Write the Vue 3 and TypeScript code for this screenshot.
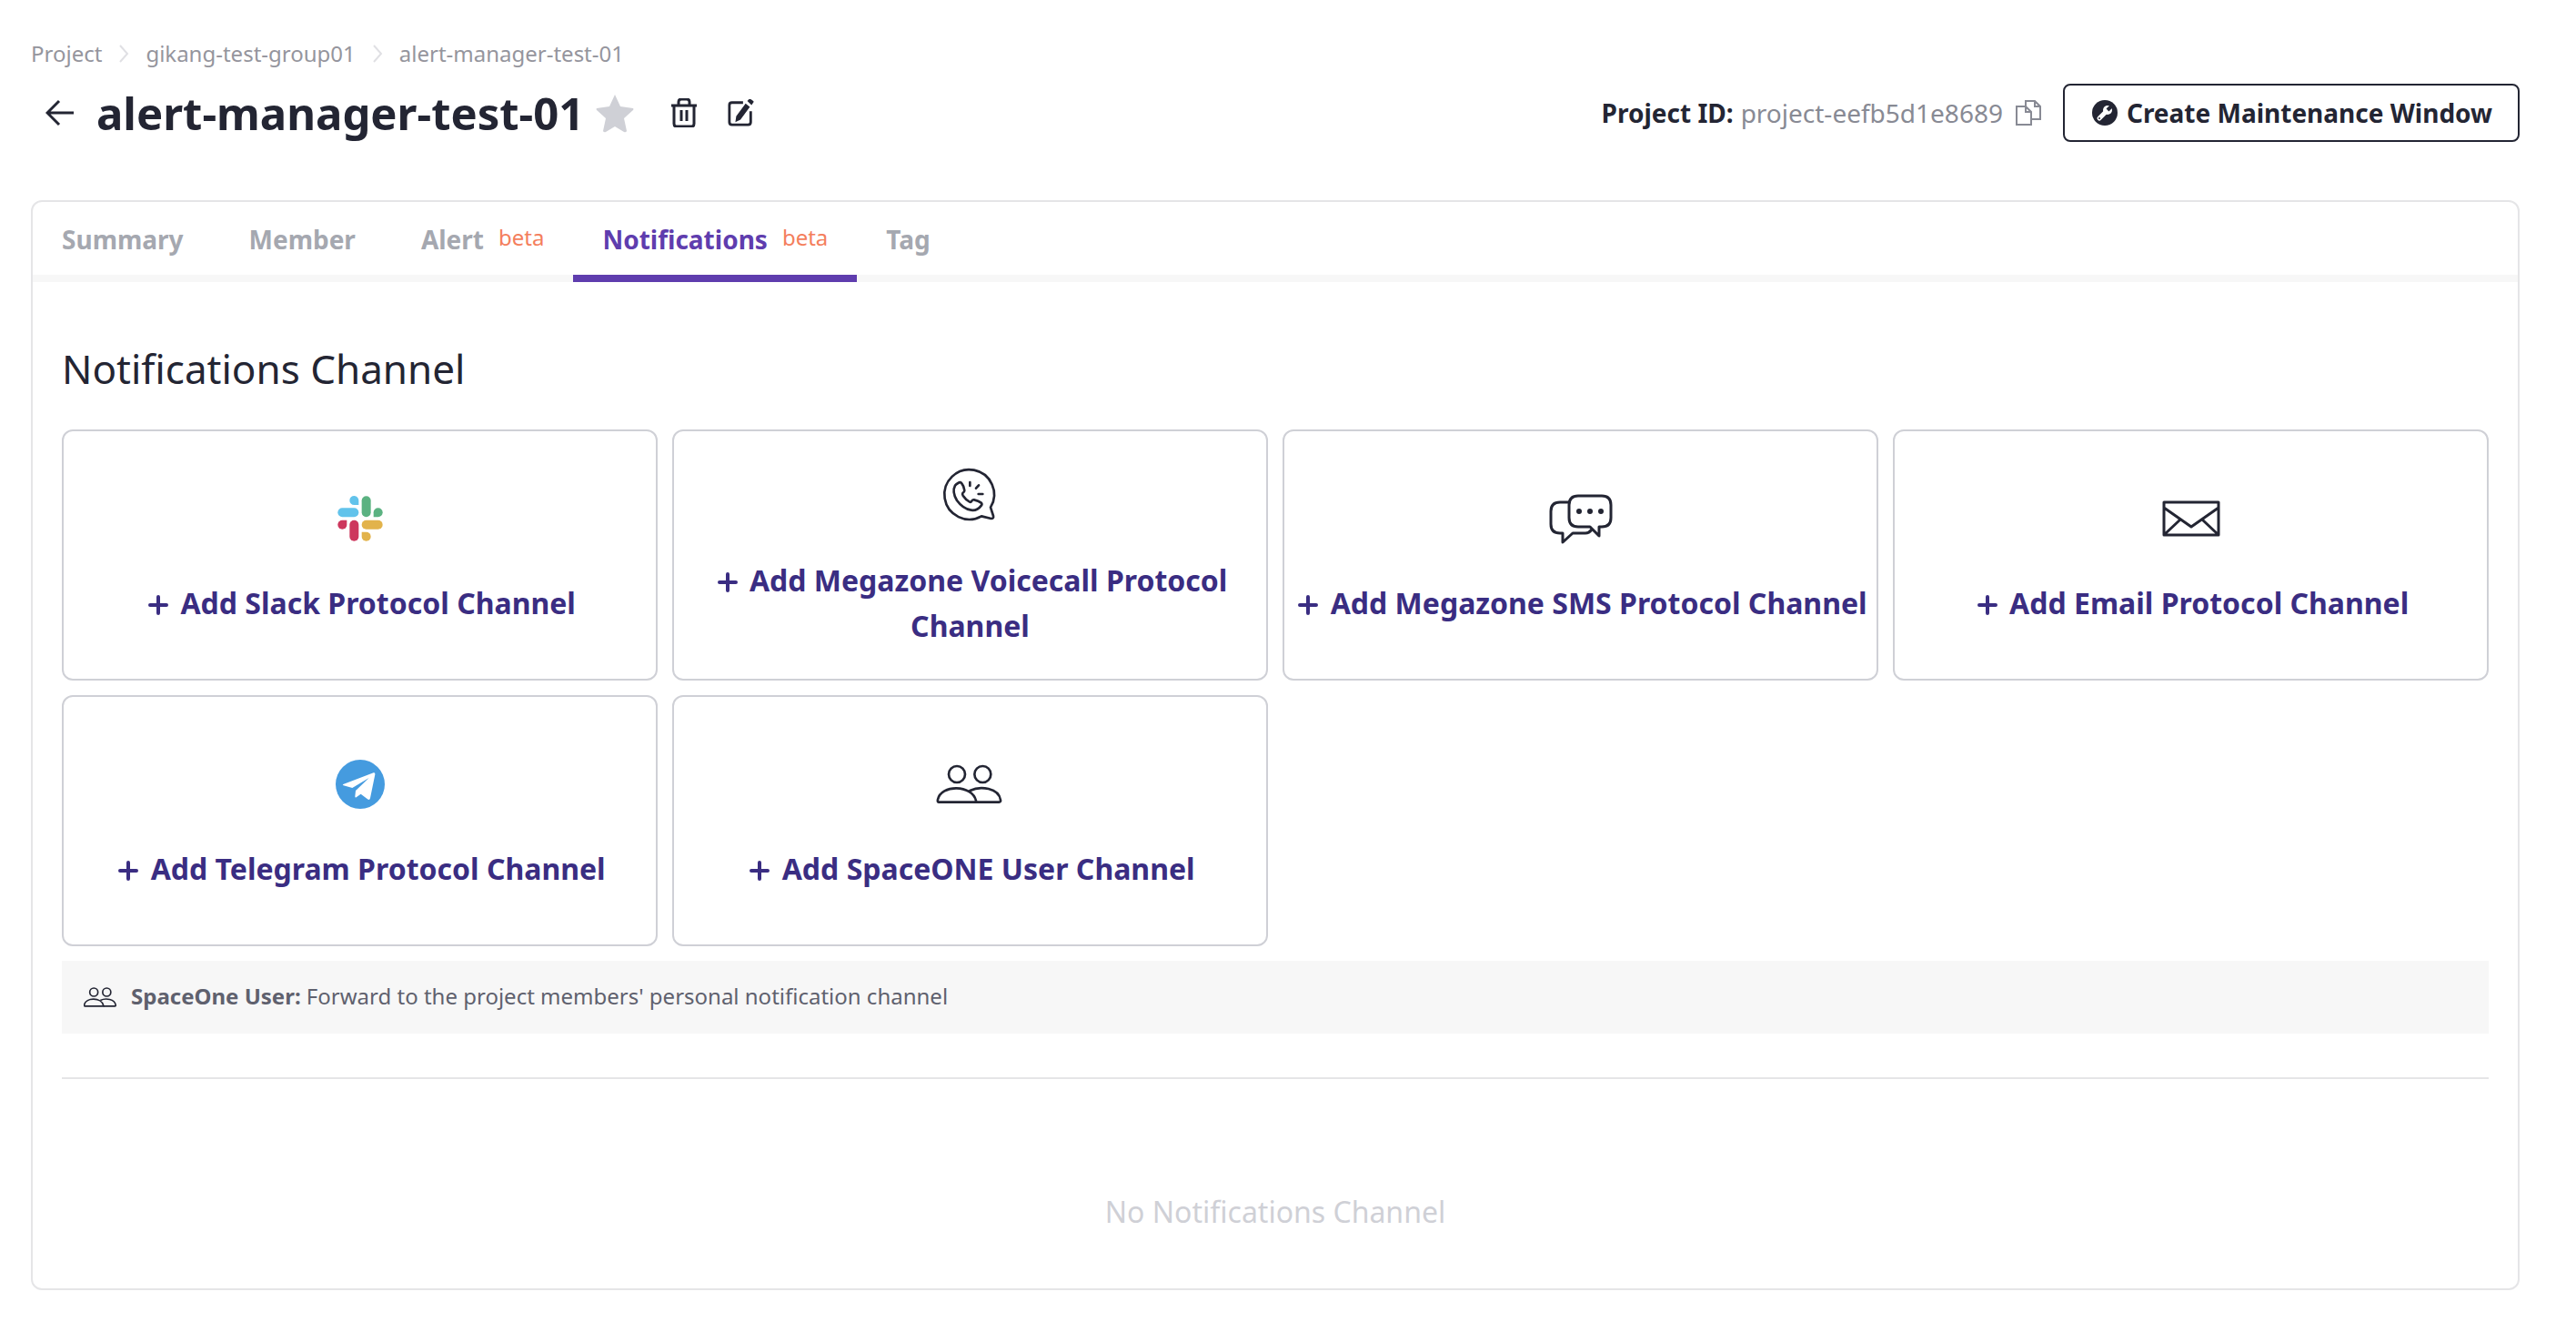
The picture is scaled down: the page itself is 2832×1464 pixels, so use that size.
<script setup lang="ts">
import { ref } from 'vue'

interface Tab {
  name: string
  label: string
  beta?: boolean
}

interface Protocol {
  icon: 'slack' | 'voicecall' | 'sms' | 'email' | 'telegram' | 'users'
  label: string
}

const projectName = 'alert-manager-test-01'
const projectId = 'project-eefb5d1e8689'
const parents: string[] = ['Project', 'gikang-test-group01']

const tabs: Tab[] = [
  { name: 'summary', label: 'Summary' },
  { name: 'member', label: 'Member' },
  { name: 'alert', label: 'Alert', beta: true },
  { name: 'notifications', label: 'Notifications', beta: true },
  { name: 'tag', label: 'Tag' },
]
const activeTab = ref('notifications')

const protocols: Protocol[] = [
  { icon: 'slack', label: 'Add Slack Protocol Channel' },
  { icon: 'voicecall', label: 'Add Megazone Voicecall Protocol Channel' },
  { icon: 'sms', label: 'Add Megazone SMS Protocol Channel' },
  { icon: 'email', label: 'Add Email Protocol Channel' },
  { icon: 'telegram', label: 'Add Telegram Protocol Channel' },
  { icon: 'users', label: 'Add SpaceONE User Channel' },
]
</script>

<template>
  <main class="page">
    <nav class="breadcrumb" aria-label="Breadcrumb">
      <template v-for="item in parents" :key="item">
        <a href="#">{{ item }}</a>
        <svg class="chevron" viewBox="0 0 12 20" aria-hidden="true"><path d="M2 1l8 9-8 9" /></svg>
      </template>
      <a href="#" aria-current="page">{{ projectName }}</a>
    </nav>

    <header class="title-row">
      <button class="icon-button back" type="button" aria-label="Back">
        <svg viewBox="0 0 32 32" class="line-icon"><path d="M31 16H3M15 3L2 16l13 13" /></svg>
      </button>
      <h1>{{ projectName }}</h1>
      <button class="icon-button star" type="button" aria-label="Favorite">
        <svg viewBox="0 0 44 44">
          <path d="M22 2l6 13 14 2q1 1 0 2L32 28l3 14q-1 2-3 1l-10-6-10 6q-2 1-3-1l3-14L2 19q-1-1 0-2l14-2z" />
        </svg>
      </button>
      <button class="icon-button trash" type="button" aria-label="Delete">
        <svg viewBox="0 0 32 32" class="line-icon">
          <path d="M2 8h28M5 8v20q0 3 3 3h16q3 0 3-3V8M10 7V4q0-3 3-3h6q3 0 3 3v3M13 13v12M19 13v12" />
        </svg>
      </button>
      <button class="icon-button edit" type="button" aria-label="Edit">
        <svg viewBox="0 0 32 32" class="line-icon">
          <path d="M18 4H5Q2 4 2 7v20q0 3 3 3h19q3 0 3-3V14" />
          <path class="solid" d="M21 5l5 4-11 15-6 3 1-7zM23 2l2-2q1-1 2 0l3 2q1 1 0 2l-2 3z" />
        </svg>
      </button>
      <div class="project-id">
        <strong>Project ID:</strong>
        <span>{{ projectId }}</span>
        <button class="icon-button copy" type="button" aria-label="Copy project ID">
          <svg viewBox="0 0 28 28">
            <path d="M1 7h10l6 6v14H1zM11 7v6h6M11 7V1h10l6 6v14H17M21 1v6h6" />
          </svg>
        </button>
      </div>
      <button class="maintenance" type="button">
        <svg viewBox="0 0 28 28" aria-hidden="true">
          <circle cx="14" cy="14" r="14" fill="#232533" />
          <path d="M8 20l8-8" stroke="#fff" stroke-width="5" stroke-linecap="round" />
          <circle cx="17" cy="11" r="5" fill="#fff" />
          <path d="M17 11l6-6" stroke="#232533" stroke-width="4" />
          <circle cx="8" cy="20" r="1" fill="#232533" />
        </svg>
        Create Maintenance Window
      </button>
    </header>

    <section class="panel">
      <div class="tabs" role="tablist">
        <button
          v-for="tab in tabs"
          :key="tab.name"
          class="tab"
          :class="{ active: tab.name === activeTab }"
          type="button"
          role="tab"
          :aria-selected="tab.name === activeTab"
          @click="activeTab = tab.name"
        >
          <span class="tab-label">{{ tab.label }}</span>
          <span v-if="tab.beta" class="beta">beta</span>
        </button>
      </div>

      <div class="content">
        <h2>Notifications Channel</h2>
        <div class="cards">
          <button v-for="item in protocols" :key="item.icon" class="card" type="button">
            <svg v-if="item.icon === 'slack'" class="card-icon" viewBox="54 36 228 228">
              <g fill="#62c3eb">
                <path d="M163 105V91a15 15 0 1 0-15 14z" />
                <rect x="94" y="115" width="69" height="30" rx="15" />
              </g>
              <g fill="#5bb281">
                <rect x="173" y="76" width="30" height="69" rx="15" />
                <path d="M212 145v-15a15 15 0 1 1 15 15z" />
              </g>
              <g fill="#cd375d">
                <path d="M124 155v15a15 15 0 1 1-15-15z" />
                <rect x="133" y="155" width="30" height="69" rx="15" />
              </g>
              <g fill="#e2b34b">
                <rect x="173" y="155" width="69" height="30" rx="15" />
                <path d="M173 194h15a15 15 0 1 1-15 15z" />
              </g>
            </svg>
            <svg v-else-if="item.icon === 'voicecall'" class="card-icon outline thick" viewBox="58 21 228 228">
              <path d="M238 173A82 82 0 1 0 208 202L240 210Q249 210 247 201Z" />
              <path d="M131 93Q138 87 143 94Q151 104 152 117Q152 122 146 126Q144 129 147 134Q157 149 169 155Q173 157 176 152Q179 147 184 148Q198 151 207 158Q211 162 208 166Q194 185 174 182Q147 178 127 150Q110 122 121 101Q125 96 131 93Z" />
              <path d="M170 90v12M199 100l-9 10M212 129h-14" />
            </svg>
            <svg v-else-if="item.icon === 'sms'" class="card-icon outline" viewBox="0 0 76 76">
              <path d="M35 13h26q10 0 10 10v14q0 10-10 10h-3v10l-10-10H35q-10 0-10-10V23q0-10 10-10z" />
              <path d="M25 20H15Q5 20 5 30v14q0 10 10 10h3v10l11-10h14q4 0 7-4" />
              <g fill="#232533" stroke="none">
                <circle cx="36" cy="30" r="3" /><circle cx="48" cy="30" r="3" /><circle cx="60" cy="30" r="3" />
              </g>
            </svg>
            <svg v-else-if="item.icon === 'email'" class="card-icon outline" viewBox="0 0 76 76">
              <path d="M8 20h60v36H8zM8 26l30 21 30-21M9 55l17-16M67 55L50 39" />
            </svg>
            <svg v-else-if="item.icon === 'telegram'" class="card-icon" viewBox="54 12 228 228">
              <circle cx="168" cy="126" r="81" fill="#459bdf" />
              <path d="M112 126L212 88Q218 87 217 94L201 172Q199 180 192 175L170 158L155 169Q151 171 151 166L153 147L197 105L142 138L113 130Q108 128 112 126Z" fill="#fff" />
            </svg>
            <svg v-else class="card-icon outline thick" viewBox="58 12 228 228">
              <circle cx="127" cy="93" r="27" /><circle cx="212" cy="93" r="27" />
              <path d="M68 185Q62 185 64 176C74 126 177 126 190 180V185Z" />
              <path d="M170 147C205 130 265 138 271 178Q272 185 266 185H190" />
            </svg>
            <span class="card-label">
              <svg class="plus" viewBox="0 0 24 24" aria-hidden="true"><path d="M12 3v18M3 12h18" /></svg>
              {{ item.label }}
            </span>
          </button>
        </div>

        <p class="notice">
          <svg class="notice-icon" viewBox="60 60 216 132" aria-hidden="true">
            <circle cx="127" cy="93" r="27" /><circle cx="212" cy="93" r="27" />
            <path d="M68 185Q62 185 64 176C74 126 177 126 190 180V185Z" />
            <path d="M170 147C205 130 265 138 271 178Q272 185 266 185H190" />
          </svg>
          <span><strong>SpaceOne User:</strong> Forward to the project members' personal notification channel</span>
        </p>
        <hr />
        <p class="empty">No Notifications Channel</p>
      </div>
    </section>
  </main>
</template>

<style>
body {
  background: #fff;
}
</style>

<style scoped>
.page {
  padding: 40px 62px 46px 34px;
  color: #232533;
  font-family: "Noto Sans", sans-serif;
}
h1, h2, p {
  margin: 0;
}
button {
  padding: 0;
  border: 0;
  background: none;
  color: inherit;
  font: inherit;
  cursor: pointer;
}
svg {
  fill: none;
}

.breadcrumb {
  display: flex;
  align-items: center;
  font-size: 24px;
  line-height: 38px;
}
.breadcrumb a {
  color: #95959d;
  text-decoration: none;
}
.chevron {
  width: 12px;
  height: 20px;
  margin: 0 18px;
  stroke: #e0e0e4;
  stroke-width: 2px;
}

.title-row {
  display: flex;
  align-items: center;
  height: 64px;
  margin: 14px 0 64px;
}
h1 {
  margin-left: 24px;
  font-size: 49px;
  line-height: 64px;
  font-weight: 700;
}
.icon-button {
  flex: none;
  width: 32px;
  height: 32px;
}
.icon-button svg {
  display: block;
  width: 100%;
  height: 100%;
}
.line-icon {
  stroke: #232533;
  stroke-width: 3px;
}
.line-icon .solid {
  fill: #232533;
  stroke: none;
}
.back {
  margin-left: 16px;
}
.star {
  width: 44px;
  height: 44px;
  margin-left: 12px;
}
.star path {
  fill: #cfd0d6;
}
.trash {
  margin-left: 38px;
}
.edit {
  width: 30px;
  height: 30px;
  margin-left: 32px;
}
.project-id {
  display: flex;
  align-items: center;
  gap: 8px;
  margin-left: auto;
  font-size: 28px;
}
.project-id span {
  color: #888a94;
}
.copy {
  width: 28px;
  height: 28px;
  margin-left: 6px;
}
.copy svg {
  stroke: #888a94;
  stroke-width: 2px;
}
.maintenance {
  display: flex;
  align-items: center;
  gap: 10px;
  height: 64px;
  margin-left: 24px;
  padding: 0 28px 0 30px;
  border: 2px solid #232533;
  border-radius: 8px;
  font-size: 28px;
  font-weight: 700;
  white-space: nowrap;
}
.maintenance svg {
  width: 28px;
  height: 28px;
}

.panel {
  border: 2px solid #e5e5e7;
  border-radius: 12px;
}
.tabs {
  display: flex;
  background: linear-gradient(to top, #f7f7f7 8px, transparent 8px);
}
.tab {
  display: flex;
  align-items: center;
  height: 88px;
  padding: 2px 32px 0;
  border-bottom: 8px solid transparent;
  color: #a5a8b0;
  font-size: 28px;
  font-weight: 700;
}
.tab.active {
  border-bottom-color: #5f3dae;
  color: #5f3dae;
}
.tab-label {
  margin-right: 8px;
}
.beta {
  margin: 0 0 6px 8px;
  color: #f47e5c;
  font-size: 24px;
  font-weight: 400;
}

.content {
  padding: 62px 32px 60px;
}
h2 {
  margin-bottom: 34px;
  font-size: 44px;
  line-height: 66px;
  font-weight: 400;
}
.cards {
  display: grid;
  grid-template-columns: repeat(4, 1fr);
  gap: 16px;
}
.card {
  display: flex;
  flex-direction: column;
  align-items: center;
  justify-content: center;
  gap: 30px;
  min-height: 276px;
  border: 2px solid #cfd0d6;
  border-radius: 12px;
  color: #3a2d82;
}
.card-icon {
  flex: none;
  width: 76px;
  height: 76px;
}
.outline {
  stroke: #232533;
  stroke-width: 3px;
  stroke-linejoin: round;
  stroke-linecap: round;
}
.thick {
  stroke-width: 8px;
}
.card-label {
  font-size: 32px;
  line-height: 50px;
  font-weight: 700;
}
.plus {
  width: 24px;
  height: 24px;
  margin: 0 4px;
  vertical-align: -2px;
  stroke: #3a2d82;
  stroke-width: 4px;
  stroke-linecap: round;
}

.notice {
  display: flex;
  align-items: center;
  gap: 16px;
  height: 76px;
  margin: 16px 0 48px;
  padding: 0 24px 4px;
  background: #f7f7f7;
  color: #5f616e;
  font-size: 24px;
}
.notice-icon {
  width: 36px;
  height: 22px;
  margin-top: 4px;
  stroke: #232533;
  stroke-width: 10px;
}
hr {
  margin: 0;
  border: 0;
  border-top: 2px solid #e5e5e7;
}
.empty {
  margin-top: 122px;
  color: #cfd0d6;
  font-size: 32px;
  line-height: 48px;
  text-align: center;
}
</style>
